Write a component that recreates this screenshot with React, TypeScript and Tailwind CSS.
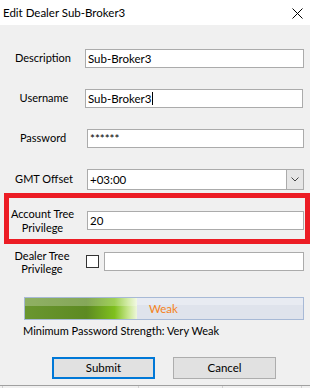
import React from 'react';

const font = { fontFamily: 'Lato, "Noto Sans", sans-serif' };

const TextBox = ({ value, caret, className = '' }: { value: string; caret?: boolean; className?: string }) => (
  <div className={`flex h-[19px] items-center border border-[#ababab] bg-white pl-[2px] text-[11.5px] leading-none text-black ${className}`}>
    <span>{value}</span>
    {caret && <span className="ml-px h-[13px] w-px bg-black" />}
  </div>
);

export default function App() {
  return (
    <div className="flex h-[388px] w-[310px] flex-col overflow-hidden bg-[#f0f0f0] text-[11px] text-black" style={font}>
      {/* Title bar */}
      <div className="flex h-[25px] shrink-0 items-center justify-between bg-white pl-[3px] pr-[7px]">
        <span className="text-[11.5px] leading-none">Edit Dealer Sub-Broker3</span>
        <svg width="11" height="11" viewBox="0 0 11 11" className="mt-px">
          <path d="M0.5 0.5 L10.5 10.5 M10.5 0.5 L0.5 10.5" stroke="#000" strokeWidth="1" />
        </svg>
      </div>

      {/* Description */}
      <div className="mt-[24px] flex h-[19px] items-center">
        <div className="w-[82px] pl-[4px] text-center">Description</div>
        <TextBox value="Sub-Broker3" className="ml-[3px] w-[219px]" />
      </div>

      {/* Username */}
      <div className="mt-[21px] flex h-[19px] items-center">
        <div className="w-[82px] pl-[6px] text-center">Username</div>
        <TextBox value="Sub-Broker3" caret className="ml-[3px] w-[218px]" />
      </div>

      {/* Password */}
      <div className="mt-[21px] flex h-[19px] items-center">
        <div className="w-[82px] pl-[4px] text-center">Password</div>
        <TextBox value="******" className="ml-[5px] w-[217px]" />
      </div>

      {/* GMT Offset */}
      <div className="mt-[21px] flex h-[21px] items-center">
        <div className="w-[82px] pl-[6px] text-center">GMT Offset</div>
        <div className="ml-[5px] flex h-[21px] w-[217px] items-stretch border border-[#ababab] bg-white">
          <div className="flex flex-1 items-center pl-[2px] text-[11.5px] leading-none">+03:00</div>
          <div className="flex w-[17px] items-center justify-center border-l border-[#ababab] bg-[#e6e6e6]">
            <svg width="8" height="5" viewBox="0 0 8 5">
              <path d="M0.5 0.5 L4 4 L7.5 0.5" stroke="#444" strokeWidth="1" fill="none" />
            </svg>
          </div>
        </div>
      </div>

      {/* Account Tree Privilege (highlighted) */}
      <div className="ml-[4px] mt-[3px] flex h-[52px] w-[306px] items-center border-[5px] border-[#ec1c24] pt-[4px]">
        <div className="w-[67px] whitespace-nowrap text-center leading-[14px]">
          Account Tree
          <br />
          Privilege
        </div>
        <TextBox value="20" className="ml-[11px] h-[18px] w-[217px]" />
      </div>

      {/* Dealer Tree Privilege */}
      <div className="mt-[8px] flex h-[19px] items-center">
        <div className="w-[82px] whitespace-nowrap pl-[2px] text-center leading-[13px]">
          Dealer Tree
          <br />
          Privilege
        </div>
        <div className="ml-[4px] h-[13px] w-[13px] border border-[#333] bg-white" />
        <TextBox value="" className="ml-[5px] w-[200px]" />
      </div>

      {/* Password strength */}
      <div className="ml-[24px] mt-[26px] flex h-[23px] w-[280px] border border-[#a7b9d6] bg-[#dfe3ec]">
        <div className="relative w-[112px] bg-[linear-gradient(to_right,#6a9630_0%,#5d8a22_55%,#7fc01e_80%,#c6e68c_92%,#eef7dc_100%)]">
          <div className="absolute inset-x-0 top-0 h-[8px] bg-white/25" />
        </div>
        <div className="relative flex flex-1 items-center pl-[12px] text-[11.5px] text-[#f58220]">
          <div className="absolute inset-x-0 top-0 h-[7px] bg-white/30" />
          <span className="relative">Weak</span>
        </div>
      </div>
      <div className="ml-[23px] mt-[4px] leading-[14px]">Minimum Password Strength: Very Weak</div>

      {/* Buttons */}
      <div className="mt-[19px] flex h-[23px] gap-[18px] pl-[52px]">
        <button className="w-[103px] border-2 border-[#0078d7] bg-[#e1e1e1] text-[11.5px] leading-none">Submit</button>
        <button className="w-[103px] border border-[#adadad] bg-[#e1e1e1] text-[11.5px] leading-none">Cancel</button>
      </div>

      {/* Table edge below dialog */}
      <div className="mt-[6px] flex h-[3px] border-t border-[#a0a0a0]">
        <div className="w-[3px] border-r border-[#d0d0d0]" />
        <div className="w-[136px] border-r border-[#d0d0d0]" />
        <div className="w-[84px] border-r border-[#d0d0d0]" />
        <div className="w-[79px] border-r border-[#d0d0d0]" />
      </div>
    </div>
  );
}
